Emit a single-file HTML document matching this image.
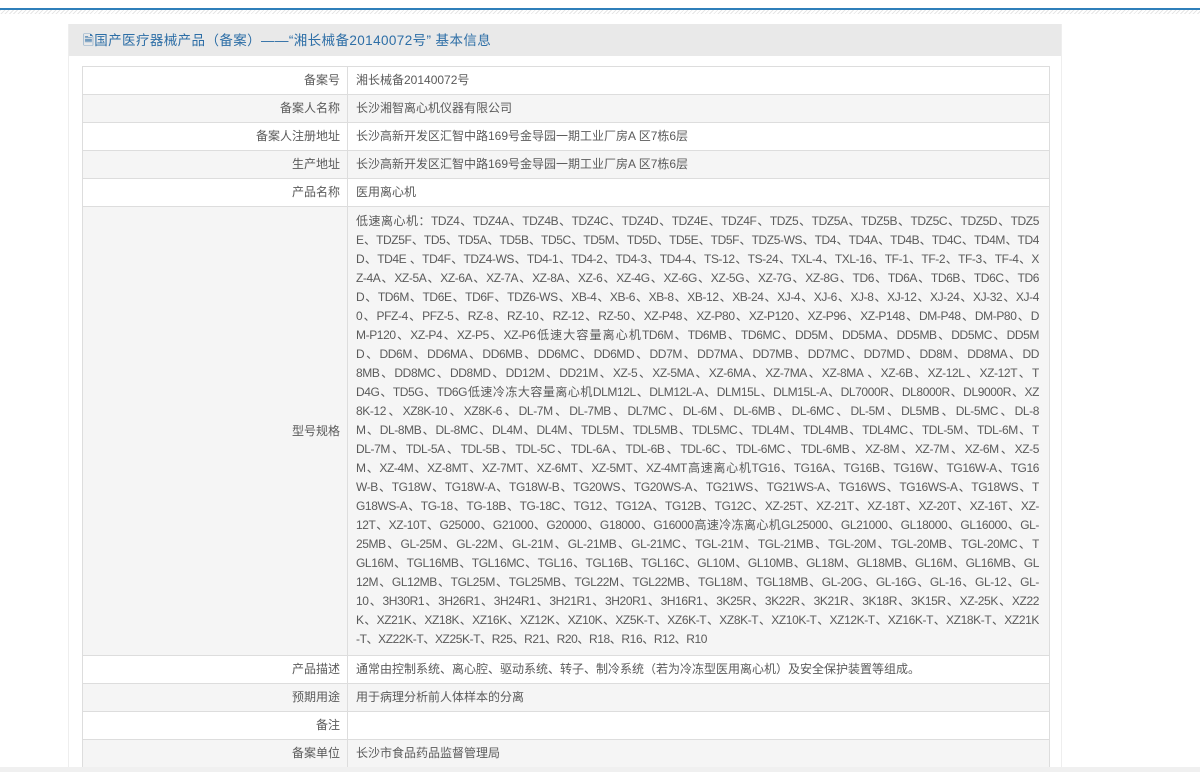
<!DOCTYPE html>
<html><head><meta charset="utf-8"><style>
*{margin:0;padding:0;box-sizing:border-box}
html,body{width:1200px;height:772px;overflow:hidden}
body{background:#fff;font-family:"Liberation Sans","Noto Sans CJK SC",sans-serif;font-size:12px;color:#5a5a5a;position:relative}
.topline{position:absolute;left:0;top:8px;width:1200px;height:2px;background:#2f7fba}
.hatch{position:absolute;left:0;top:10px;width:1200px;height:4px;background:repeating-linear-gradient(135deg,#e6e6e6 0 1px,#fff 1px 3px)}
.box{position:absolute;left:68px;top:24px;width:994px;height:760px;background:#fff;border-left:1px solid #eee;border-right:1px solid #eee}
.head{height:32px;background:#e9e9e9;color:#2d6ea6;font-size:13.5px;line-height:33px;padding-left:14px;letter-spacing:0.4px}
table{position:absolute;left:13px;top:42px;width:968px;border-collapse:collapse;table-layout:fixed}
td{border:1px solid #ddd;height:28px;line-height:27px;vertical-align:middle}
td.l{text-align:right;padding-right:7px}
td.r{padding-left:8px;padding-right:8px}
tr:nth-child(even) td{background:#f5f5f5}
.m div{white-space:nowrap;text-align:justify;text-align-last:justify;height:19px;line-height:19px;overflow:hidden;letter-spacing:-0.4px}
.m div.last{text-align-last:left}
td.m{padding-top:5px;padding-bottom:6px;padding-right:10px}
.bot{position:absolute;left:0;top:767px;width:1200px;height:5px;background:#f0f0f0}
</style></head><body>
<div class="topline"></div><div class="hatch"></div>
<div class="box">
<div class="head">🗎国产医疗器械产品（备案）——“湘长械备20140072号” 基本信息</div>
<table>
<colgroup><col style="width:265px"><col></colgroup>
<tr><td class="l">备案号</td><td class="r">湘长械备20140072号</td></tr>
<tr><td class="l">备案人名称</td><td class="r">长沙湘智离心机仪器有限公司</td></tr>
<tr><td class="l">备案人注册地址</td><td class="r">长沙高新开发区汇智中路169号金导园一期工业厂房A 区7栋6层</td></tr>
<tr><td class="l">生产地址</td><td class="r">长沙高新开发区汇智中路169号金导园一期工业厂房A 区7栋6层</td></tr>
<tr><td class="l">产品名称</td><td class="r">医用离心机</td></tr>
<tr><td class="l">型号规格</td><td class="r m">
<div>低速离心机：TDZ4、TDZ4A、TDZ4B、TDZ4C、TDZ4D、TDZ4E、TDZ4F、TDZ5、TDZ5A、TDZ5B、TDZ5C、TDZ5D、TDZ5</div>
<div>E、TDZ5F、TD5、TD5A、TD5B、TD5C、TD5M、TD5D、TD5E、TD5F、TDZ5-WS、TD4、TD4A、TD4B、TD4C、TD4M、TD4</div>
<div>D、TD4E 、TD4F、TDZ4-WS、TD4-1、TD4-2、TD4-3、TD4-4、TS-12、TS-24、TXL-4、TXL-16、TF-1、TF-2、TF-3、TF-4、X</div>
<div>Z-4A、XZ-5A、XZ-6A、XZ-7A、XZ-8A、XZ-6、XZ-4G、XZ-6G、XZ-5G、XZ-7G、XZ-8G、TD6、TD6A、TD6B、TD6C、TD6</div>
<div>D、TD6M、TD6E、TD6F、TDZ6-WS、XB-4、XB-6、XB-8、XB-12、XB-24、XJ-4、XJ-6、XJ-8、XJ-12、XJ-24、XJ-32、XJ-4</div>
<div>0、PFZ-4、PFZ-5、RZ-8、RZ-10、RZ-12、RZ-50、XZ-P48、XZ-P80、XZ-P120、XZ-P96、XZ-P148、DM-P48、DM-P80、D</div>
<div>M-P120、XZ-P4、XZ-P5、XZ-P6低速大容量离心机TD6M、TD6MB、TD6MC、DD5M、DD5MA、DD5MB、DD5MC、DD5M</div>
<div>D、DD6M、DD6MA、DD6MB、DD6MC、DD6MD、DD7M、DD7MA、DD7MB、DD7MC、DD7MD、DD8M、DD8MA、DD</div>
<div>8MB、DD8MC、DD8MD、DD12M、DD21M、XZ-5、XZ-5MA、XZ-6MA、XZ-7MA、XZ-8MA 、XZ-6B、XZ-12L、XZ-12T、T</div>
<div>D4G、TD5G、TD6G低速冷冻大容量离心机DLM12L、DLM12L-A、DLM15L、DLM15L-A、DL7000R、DL8000R、DL9000R、XZ</div>
<div>8K-12、XZ8K-10、XZ8K-6、DL-7M、DL-7MB、DL7MC、DL-6M、DL-6MB、DL-6MC、DL-5M、DL5MB、DL-5MC、DL-8</div>
<div>M、DL-8MB、DL-8MC、DL4M、DL4M、TDL5M、TDL5MB、TDL5MC、TDL4M、TDL4MB、TDL4MC、TDL-5M、TDL-6M、T</div>
<div>DL-7M、TDL-5A、TDL-5B、TDL-5C、TDL-6A、TDL-6B、TDL-6C、TDL-6MC、TDL-6MB、XZ-8M、XZ-7M、XZ-6M、XZ-5</div>
<div>M、XZ-4M、XZ-8MT、XZ-7MT、XZ-6MT、XZ-5MT、XZ-4MT高速离心机TG16、TG16A、TG16B、TG16W、TG16W-A、TG16</div>
<div>W-B、TG18W、TG18W-A、TG18W-B、TG20WS、TG20WS-A、TG21WS、TG21WS-A、TG16WS、TG16WS-A、TG18WS、T</div>
<div>G18WS-A、TG-18、TG-18B、TG-18C、TG12、TG12A、TG12B、TG12C、XZ-25T、XZ-21T、XZ-18T、XZ-20T、XZ-16T、XZ-</div>
<div>12T、XZ-10T、G25000、G21000、G20000、G18000、G16000高速冷冻离心机GL25000、GL21000、GL18000、GL16000、GL-</div>
<div>25MB、GL-25M、GL-22M、GL-21M、GL-21MB、GL-21MC、TGL-21M、TGL-21MB、TGL-20M、TGL-20MB、TGL-20MC、T</div>
<div>GL16M、TGL16MB、TGL16MC、TGL16、TGL16B、TGL16C、GL10M、GL10MB、GL18M、GL18MB、GL16M、GL16MB、GL</div>
<div>12M、GL12MB、TGL25M、TGL25MB、TGL22M、TGL22MB、TGL18M、TGL18MB、GL-20G、GL-16G、GL-16、GL-12、GL-</div>
<div>10、3H30R1、3H26R1、3H24R1、3H21R1、3H20R1、3H16R1、3K25R、3K22R、3K21R、3K18R、3K15R、XZ-25K、XZ22</div>
<div>K、XZ21K、XZ18K、XZ16K、XZ12K、XZ10K、XZ5K-T、XZ6K-T、XZ8K-T、XZ10K-T、XZ12K-T、XZ16K-T、XZ18K-T、XZ21K</div>
<div class="last">-T、XZ22K-T、XZ25K-T、R25、R21、R20、R18、R16、R12、R10</div>
</td></tr>
<tr><td class="l">产品描述</td><td class="r">通常由控制系统、离心腔、驱动系统、转子、制冷系统（若为冷冻型医用离心机）及安全保护装置等组成。</td></tr>
<tr><td class="l">预期用途</td><td class="r">用于病理分析前人体样本的分离</td></tr>
<tr><td class="l">备注</td><td class="r"></td></tr>
<tr><td class="l">备案单位</td><td class="r">长沙市食品药品监督管理局</td></tr>
<tr><td class="l"></td><td class="r"></td></tr>
</table>
</div>
<div class="bot"></div>
</body></html>
